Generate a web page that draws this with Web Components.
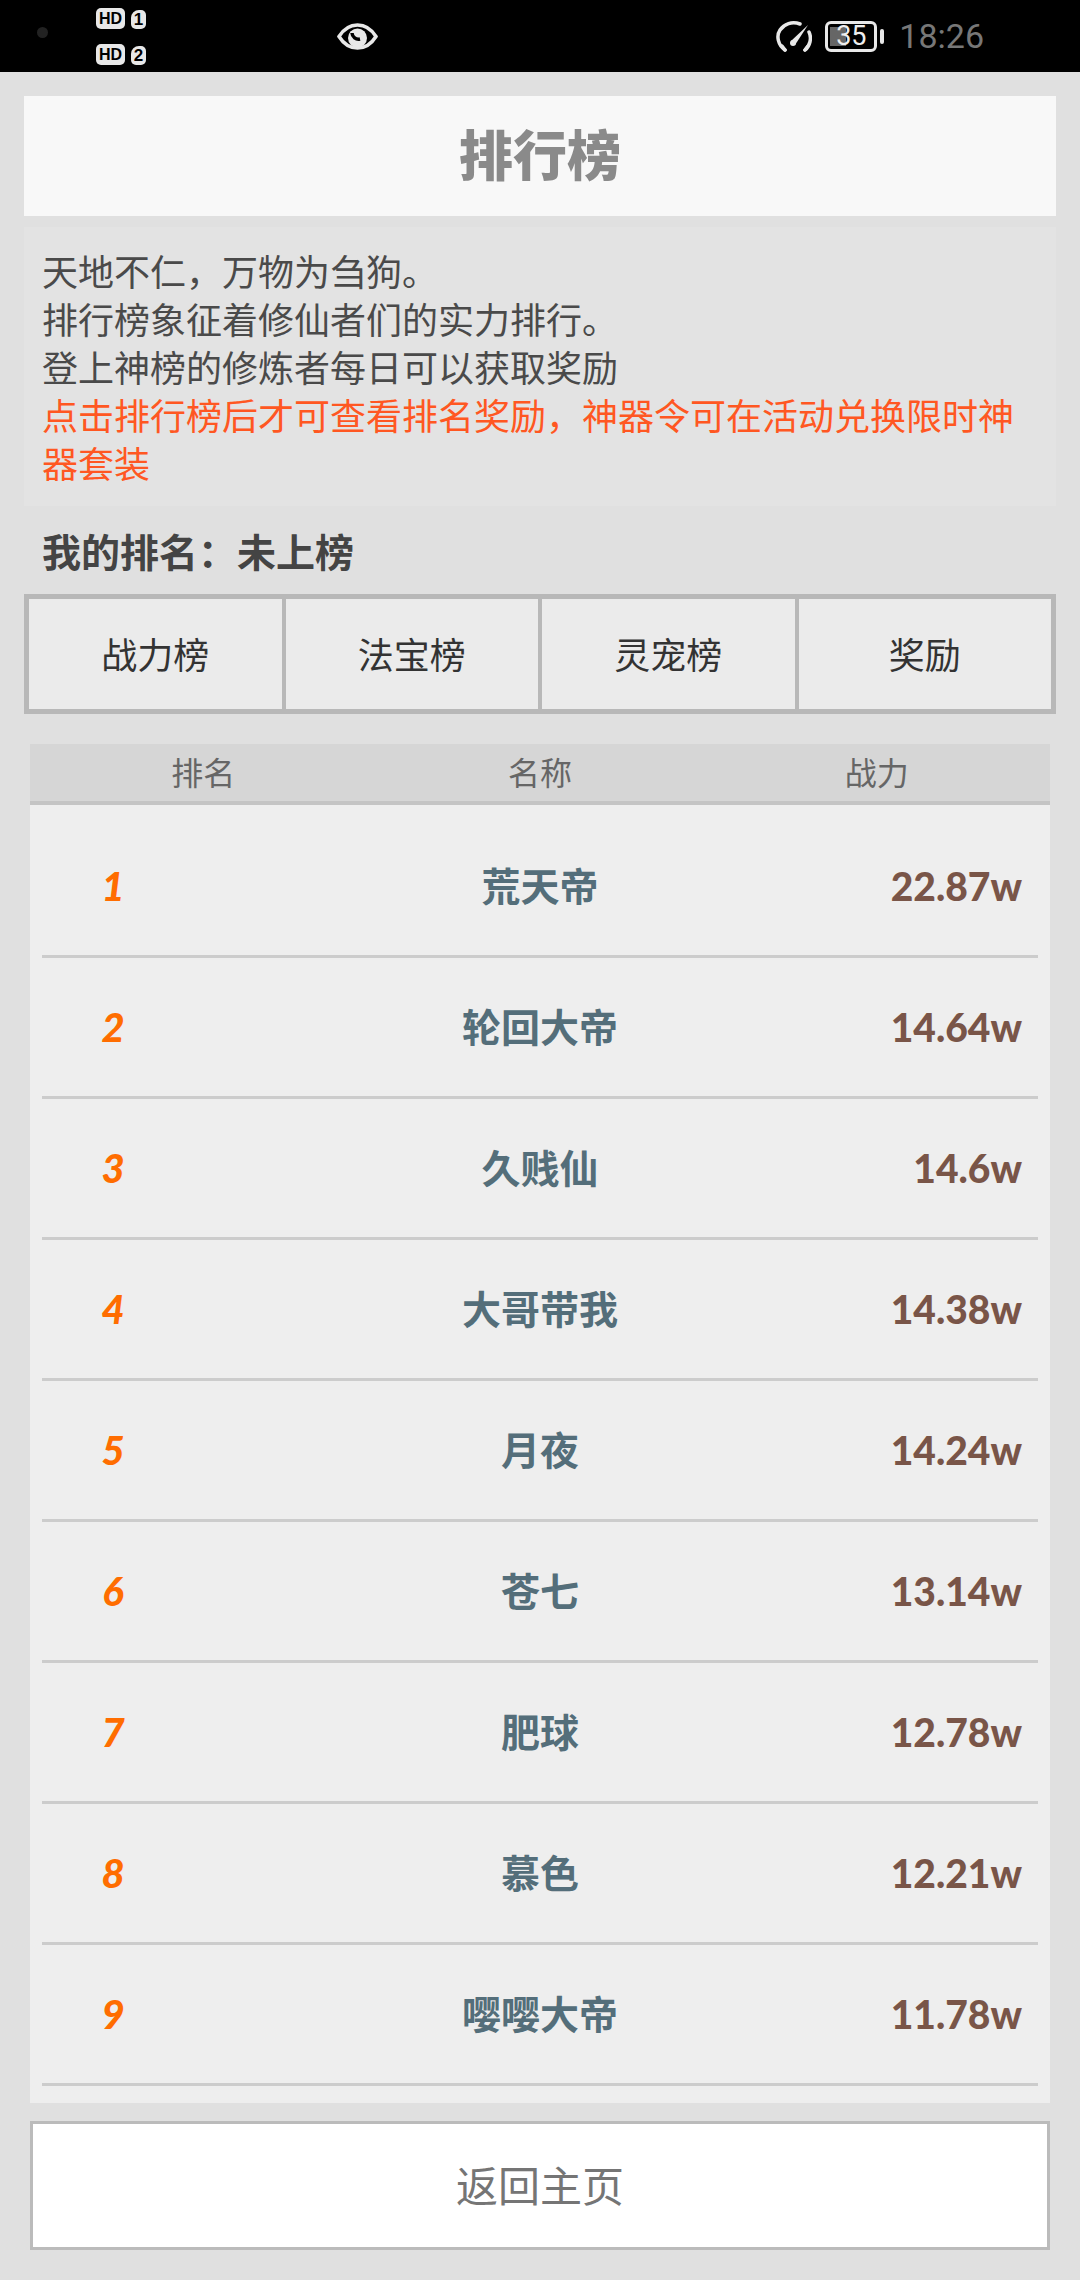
<!DOCTYPE html>
<html lang="zh">
<head>
<meta charset="utf-8">
<title>排行榜</title>
<style>
  html, body { margin: 0; padding: 0; }
  body {
    width: 1080px;
    height: 2280px;
    overflow: hidden;
    background: #e0e0e0;
    font-family: "Noto Sans CJK SC", "Noto Sans", sans-serif;
  }
</style>
</head>
<body>
<status-bar></status-bar>
<page-title>排行榜</page-title>
<notice-box>
  天地不仁，万物为刍狗。<br>
  排行榜象征着修仙者们的实力排行。<br>
  登上神榜的修炼者每日可以获取奖励
  <span slot="warn">点击排行榜后才可查看排名奖励，神器令可在活动兑换限时神器套装</span>
</notice-box>
<my-rank>我的排名：未上榜</my-rank>
<rank-tabs></rank-tabs>
<rank-table></rank-table>
<back-button>返回主页</back-button>

<script>
class StatusBar extends HTMLElement {
  constructor() {
    super();
    this.attachShadow({ mode: "open" });
    this.shadowRoot.innerHTML = `
      <style>
        :host { display: flex; align-items: center; height: 72px; background: #000; color: #e8e8e8; }
        .cam { width: 11px; height: 11px; border-radius: 50%; background: #222; margin: -7px 0 0 37px; }
        .hd { display: flex; flex-direction: column; gap: 15px; margin-left: 48px; width: 51px; }
        .hd div { display: flex; gap: 6px; align-items: flex-end; }
        .tag { font: bold 16px/21px "Liberation Sans", sans-serif; background: #e8e8e8; color: #000; border-radius: 5px; text-align: center; }
        .tag.a { width: 29px; height: 21px; }
        .tag.b { width: 15px; height: 19px; font-size: 17px; line-height: 20px; border-top-left-radius: 8px; }
        .eye { margin-left: 190px; }
        .right { margin-left: auto; display: flex; align-items: center; margin-right: 96px; }
        .speed { margin-right: 13px; }
        .batt { position: relative; width: 52px; height: 31px; border: 3px solid #e8e8e8; border-radius: 6px; box-sizing: border-box; }
        .batt i { position: absolute; left: 2px; top: 3px; bottom: 3px; width: 16px; background: #666; }
        .batt b { position: relative; display: block; font: 400 27px/25px Roboto, sans-serif; text-align: center; color: #eee; }
        .cap { width: 4px; height: 15px; background: #e8e8e8; border-radius: 2px; margin: 0 15px 0 3px; }
        .time { font: 400 34px/1 Roboto, sans-serif; color: #777; }
      </style>
      <span class="cam"></span>
      <div class="hd">
        <div><span class="tag a">HD</span><span class="tag b">1</span></div>
        <div><span class="tag a">HD</span><span class="tag b">2</span></div>
      </div>
      <svg class="eye" width="41" height="27" viewBox="0 0 41 27">
        <path d="M2 13.5C7 5.5 13 2 20.5 2S34 5.5 39 13.5C34 21.5 28 25 20.5 25S7 21.5 2 13.5z" fill="none" stroke="#e8e8e8" stroke-width="3.5"/>
        <circle cx="20.5" cy="15" r="9.5" fill="#e8e8e8"/>
        <path d="M15 10a6.5 6.5 0 0 0 8 6" fill="none" stroke="#000" stroke-width="3.5"/>
      </svg>
      <div class="right">
        <svg class="speed" width="36" height="31" viewBox="0 0 36 31" fill="none" stroke="#e8e8e8" stroke-width="3.5" stroke-linecap="round">
          <path d="M9 29C2 24 0 15 4 9C8 3 16 0 24 3"/>
          <path d="M9 29L6 25"/>
          <path d="M33 11c3 6 1 14-4 18"/>
          <path d="M29 29l3-4"/>
          <path d="M15 20l4 4L32 4z" fill="#e8e8e8" stroke="none"/>
          <circle cx="17" cy="22" r="3" fill="#e8e8e8" stroke="none"/>
        </svg>
        <div class="batt"><i></i><b>35</b></div>
        <span class="cap"></span>
        <span class="time">18:26</span>
      </div>
    `;
  }
}

class PageTitle extends HTMLElement {
  constructor() {
    super();
    this.attachShadow({ mode: "open" });
    this.shadowRoot.innerHTML = `
      <style>
        :host { display: flex; align-items: center; justify-content: center; height: 120px; box-sizing: border-box; padding-bottom: 8px; margin: 24px 24px 0; background: #f8f8f8; color: #8a8a8a; font-size: 54px; font-weight: 900; }
      </style>
      <slot></slot>
    `;
  }
}

class NoticeBox extends HTMLElement {
  constructor() {
    super();
    this.attachShadow({ mode: "open" });
    this.shadowRoot.innerHTML = `
      <style>
        :host { display: block; margin: 11px 24px 0; padding: 19px 18px 20px; background: #e3e3e3; color: #4a4a4a; font-size: 36px; line-height: 48px; }
        .warn { color: #ff5722; }
      </style>
      <slot></slot>
      <div class="warn"><slot name="warn"></slot></div>
    `;
  }
}

class MyRank extends HTMLElement {
  constructor() {
    super();
    this.attachShadow({ mode: "open" });
    this.shadowRoot.innerHTML = `
      <style>
        :host { display: flex; align-items: center; height: 88px; padding-left: 42px; color: #444; font-size: 39px; font-weight: 700; }
      </style>
      <slot></slot>
    `;
  }
}

class RankTabs extends HTMLElement {
  constructor() {
    super();
    this.attachShadow({ mode: "open" });
    const names = ["战力榜", "法宝榜", "灵宠榜", "奖励"];
    this.shadowRoot.innerHTML = `
      <style>
        :host { display: grid; grid-template-columns: repeat(4, 1fr); gap: 4px; height: 120px; box-sizing: border-box; margin: 0 24px; border: 5px solid #b8b8b8; background: #b8b8b8; }
        div { display: flex; align-items: center; justify-content: center; padding-bottom: 3px; background: #ebebeb; color: #333; font-size: 36px; }
      </style>
      ${names.map((n) => `<div>${n}</div>`).join("")}
    `;
  }
}

class RankTable extends HTMLElement {
  constructor() {
    super();
    this.attachShadow({ mode: "open" });
    const rows = [
      ["1", "荒天帝", "22.87w"],
      ["2", "轮回大帝", "14.64w"],
      ["3", "久贱仙", "14.6w"],
      ["4", "大哥带我", "14.38w"],
      ["5", "月夜", "14.24w"],
      ["6", "苍七", "13.14w"],
      ["7", "肥球", "12.78w"],
      ["8", "慕色", "12.21w"],
      ["9", "嘤嘤大帝", "11.78w"],
    ];
    this.shadowRoot.innerHTML = `
      <style>
        :host { display: block; margin: 30px 30px 0; height: 1359px; background: #eee; overflow: hidden; }
        .head { display: grid; grid-template-columns: repeat(3, 1fr); height: 61px; box-sizing: border-box; padding: 0 5px; border-bottom: 4px solid #c4c4c4; background: #d6d6d6; color: #666; font-size: 32px; line-height: 55px; text-align: center; }
        .rows { padding: 12px 12px 0; }
        .row { display: grid; grid-template-columns: 240px 1fr 240px; align-items: center; height: 141px; box-sizing: border-box; border-bottom: 3px solid #ccc; }
        .rank { width: 142px; text-align: center; color: #ff6d00; font: italic 900 40px Lato, sans-serif; }
        .name { text-align: center; color: #546e7a; font-size: 39px; font-weight: 700; padding-bottom: 4px; }
        .power { padding-right: 16px; text-align: right; color: #795548; font: 900 39px Lato, sans-serif; }
      </style>
      <div class="head"><span>排名</span><span>名称</span><span>战力</span></div>
      <div class="rows">
        ${rows.map((r) => `<div class="row"><span class="rank">${r[0]}</span><span class="name">${r[1]}</span><span class="power">${r[2]}</span></div>`).join("")}
      </div>
    `;
  }
}

class BackButton extends HTMLElement {
  constructor() {
    super();
    this.attachShadow({ mode: "open" });
    this.shadowRoot.innerHTML = `
      <style>
        :host { display: flex; align-items: center; justify-content: center; height: 129px; box-sizing: border-box; padding-bottom: 4px; margin: 18px 30px 0; background: #fff; border: 3px solid #bbb; color: #757575; font-size: 42px; }
      </style>
      <slot></slot>
    `;
  }
}

customElements.define("status-bar", StatusBar);
customElements.define("page-title", PageTitle);
customElements.define("notice-box", NoticeBox);
customElements.define("my-rank", MyRank);
customElements.define("rank-tabs", RankTabs);
customElements.define("rank-table", RankTable);
customElements.define("back-button", BackButton);
</script>
</body>
</html>
